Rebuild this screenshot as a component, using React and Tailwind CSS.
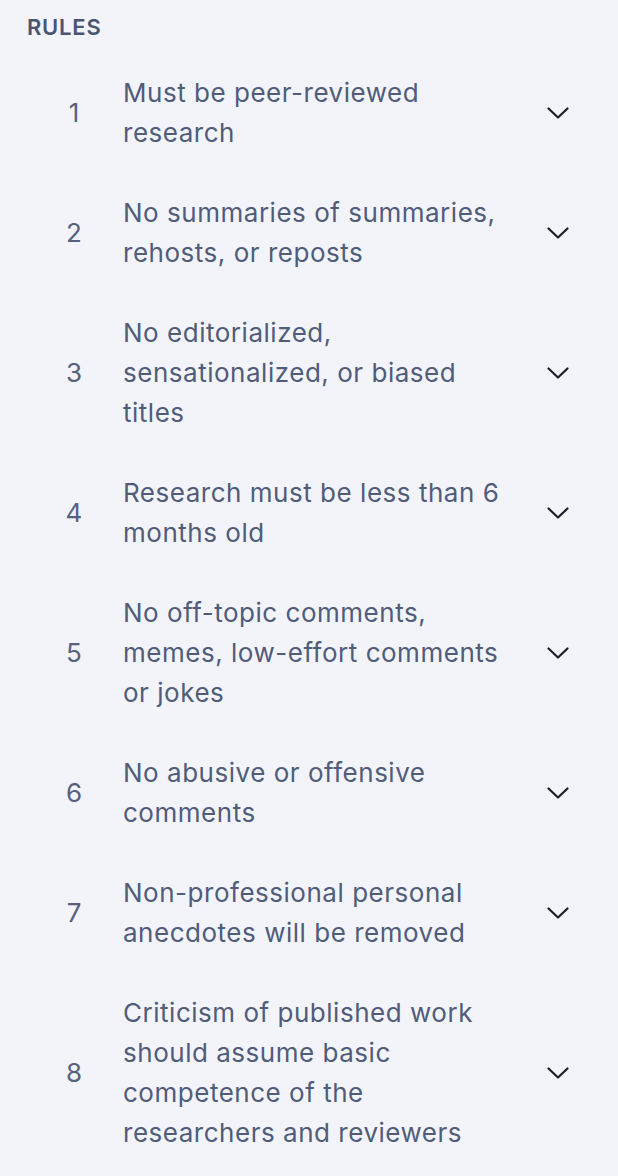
import React from "react";

const rules = [
  "Must be peer-reviewed research",
  "No summaries of summaries, rehosts, or reposts",
  "No editorialized, sensationalized, or biased titles",
  "Research must be less than 6 months old",
  "No off-topic comments, memes, low-effort comments or jokes",
  "No abusive or offensive comments",
  "Non-professional personal anecdotes will be removed",
  "Criticism of published work should assume basic competence of the researchers and reviewers",
];

function Chevron() {
  return (
    <svg width="22" height="12" viewBox="0 0 22 12" fill="none">
      <polyline
        points="1.5,1.5 11,10.5 20.5,1.5"
        stroke="#1c1f26"
        strokeWidth="2.2"
        strokeLinecap="round"
        strokeLinejoin="round"
      />
    </svg>
  );
}

export default function App() {
  return (
    <div
      className="w-[618px] min-h-[1176px] bg-[#f2f4f9]"
      style={{ fontFamily: "Inter, 'Noto Sans', sans-serif" }}
    >
      {/* HEADER */}
      <div className="h-[53px] pt-[13px] pl-[27px]">
        <h2 className="text-[22px] leading-[28px] font-semibold text-[#4a5572] tracking-[0.035em]">
          RULES
        </h2>
      </div>

      {/* LIST */}
      <ul>
        {rules.map((rule, i) => (
          <li
            key={i}
            className="flex items-center py-[20px] pl-[54px] pr-[49px] cursor-pointer"
          >
            <span className="w-[40px] text-center text-[26px] leading-[40px] text-[#56617d]">
              {i + 1}
            </span>
            <span className="flex-1 ml-[29px] mr-[28px] text-[26px] leading-[40px] tracking-[0.02em] text-[#505c7a]">
              {rule}
            </span>
            <Chevron />
          </li>
        ))}
      </ul>
    </div>
  );
}
